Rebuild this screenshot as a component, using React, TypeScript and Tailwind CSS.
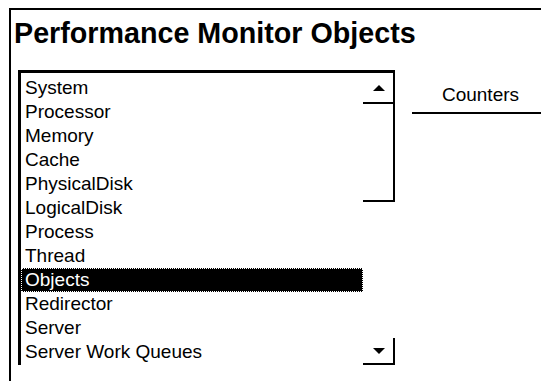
import React from "react";

const objects = [
  "System",
  "Processor",
  "Memory",
  "Cache",
  "PhysicalDisk",
  "LogicalDisk",
  "Process",
  "Thread",
  "Objects",
  "Redirector",
  "Server",
  "Server Work Queues",
];

const selected = "Objects";

const ScrollBar: React.FC = () => {
  return (
    <div className="flex w-[32px] flex-col">
      {/* up arrow */}
      <div className="flex h-[31px] items-center justify-center border-r-2 border-b-2 border-black pl-[2px]">
        <div className="h-0 w-0 border-x-[6px] border-b-[6px] border-x-transparent border-b-black" />
      </div>
      {/* thumb */}
      <div className="h-[98px] border-r-2 border-b-2 border-black" />
      <div className="flex-1" />
      {/* down arrow */}
      <div className="flex h-[27px] items-center justify-center border-r-2 border-b-2 border-black pl-[2px]">
        <div className="h-0 w-0 border-x-[6px] border-t-[6px] border-x-transparent border-t-black" />
      </div>
    </div>
  );
};

export default function App() {
  return (
    <div
      className="h-[381px] w-[541px] overflow-hidden bg-white pt-[8px] pl-[9px] text-black"
      style={{ fontFamily: '"Liberation Sans", Arial, sans-serif' }}
    >
      <div className="h-full border-t-2 border-l-2 border-black">
        <h1 className="mt-[7px] pl-[3px] text-[28.7px] leading-[32px] font-bold">
          Performance Monitor Objects
        </h1>

        <div className="mt-[21px] flex">
          {/* list box */}
          <div className="ml-[7px] flex h-[295px] w-[377px] border-t-[3px] border-l-[3px] border-black">
            <div className="flex-1 pt-[3px]">
              {objects.map((name) => (
                <div
                  key={name}
                  className={
                    name === selected
                      ? "h-[24px] border border-dotted border-white bg-black pl-[3px] text-[19px] leading-[22px] text-white"
                      : "h-[24px] pl-[4px] text-[19px] leading-[24px]"
                  }
                >
                  {name}
                </div>
              ))}
            </div>
            <ScrollBar />
          </div>

          {/* counters tab */}
          <div className="mt-[13px] ml-[17px] flex-1">
            <div className="border-b-2 border-black pb-[5px] pl-[8px] text-center text-[19px] leading-[24px]">
              Counters
            </div>
          </div>
        </div>
      </div>
    </div>
  );
}
